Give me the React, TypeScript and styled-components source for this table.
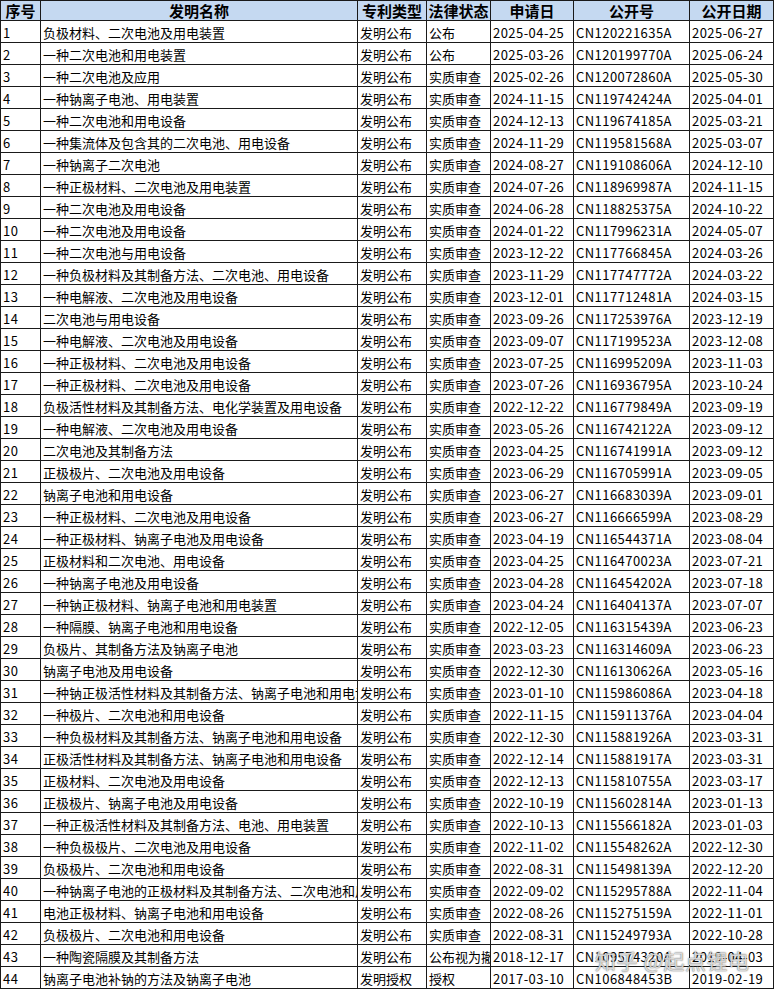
import React from "react";
import styled, { createGlobalStyle } from "styled-components";

const GlobalStyle = createGlobalStyle`
  html, body {
    margin: 0;
    padding: 0;
    background: #ffffff;
  }
  body {
    font-family: "Noto Sans CJK SC", "Noto Sans", sans-serif;
    color: #000000;
  }
`;

const COLS = "40px 317px 69px 64px 83px 116px 84px";

const Sheet = styled.div`
  position: relative;
  width: 774px;
  box-sizing: border-box;
  border-top: 1px solid #1a1a1a;
  border-left: 1px solid #1a1a1a;
`;

const Row = styled.div<{ $header?: boolean }>`
  display: grid;
  grid-template-columns: ${COLS};
  height: ${(p) => (p.$header ? "20px" : "22px")};
  background: ${(p) => (p.$header ? "#c5d9f1" : "#ffffff")};
`;

const Cell = styled.div<{ $header?: boolean; $mono?: boolean }>`
  box-sizing: border-box;
  border-right: 1px solid #1a1a1a;
  border-bottom: 1px solid #1a1a1a;
  overflow: hidden;
  white-space: nowrap;
  display: flex;
  align-items: center;
  justify-content: ${(p) => (p.$header ? "center" : "flex-start")};
  padding: ${(p) => (p.$header ? "0" : "1px 0 0 2px")};
  font-size: ${(p) => (p.$header ? "15px" : "13px")};
  font-weight: ${(p) => (p.$header ? 700 : 400)};
  letter-spacing: ${(p) => (p.$mono ? "0.45px" : "0")};
  line-height: 1;
`;

const Watermark = styled.div`
  position: absolute;
  left: 594px;
  top: 944px;
  font-size: 21px;
  font-family: "Noto Sans CJK SC", sans-serif;
  color: rgba(255, 255, 255, 0.75);
  text-shadow: 0 0 1px rgba(60, 60, 60, 0.8), 0 0 2px rgba(60, 60, 60, 0.4);
  white-space: nowrap;
  pointer-events: none;
  letter-spacing: 0.5px;
`;

type Rec = [string, string, string, string, string, string];

const data: Rec[] = [
  ["负极材料、二次电池及用电装置", "发明公布", "公布", "2025-04-25", "CN120221635A", "2025-06-27"],
  ["一种二次电池和用电装置", "发明公布", "公布", "2025-03-26", "CN120199770A", "2025-06-24"],
  ["一种二次电池及应用", "发明公布", "实质审查", "2025-02-26", "CN120072860A", "2025-05-30"],
  ["一种钠离子电池、用电装置", "发明公布", "实质审查", "2024-11-15", "CN119742424A", "2025-04-01"],
  ["一种二次电池和用电设备", "发明公布", "实质审查", "2024-12-13", "CN119674185A", "2025-03-21"],
  ["一种集流体及包含其的二次电池、用电设备", "发明公布", "实质审查", "2024-11-29", "CN119581568A", "2025-03-07"],
  ["一种钠离子二次电池", "发明公布", "实质审查", "2024-08-27", "CN119108606A", "2024-12-10"],
  ["一种正极材料、二次电池及用电装置", "发明公布", "实质审查", "2024-07-26", "CN118969987A", "2024-11-15"],
  ["一种二次电池及用电设备", "发明公布", "实质审查", "2024-06-28", "CN118825375A", "2024-10-22"],
  ["一种二次电池及用电设备", "发明公布", "实质审查", "2024-01-22", "CN117996231A", "2024-05-07"],
  ["一种二次电池与用电设备", "发明公布", "实质审查", "2023-12-22", "CN117766845A", "2024-03-26"],
  ["一种负极材料及其制备方法、二次电池、用电设备", "发明公布", "实质审查", "2023-11-29", "CN117747772A", "2024-03-22"],
  ["一种电解液、二次电池及用电设备", "发明公布", "实质审查", "2023-12-01", "CN117712481A", "2024-03-15"],
  ["二次电池与用电设备", "发明公布", "实质审查", "2023-09-26", "CN117253976A", "2023-12-19"],
  ["一种电解液、二次电池及用电设备", "发明公布", "实质审查", "2023-09-07", "CN117199523A", "2023-12-08"],
  ["一种正极材料、二次电池及用电设备", "发明公布", "实质审查", "2023-07-25", "CN116995209A", "2023-11-03"],
  ["一种正极材料、二次电池及用电设备", "发明公布", "实质审查", "2023-07-26", "CN116936795A", "2023-10-24"],
  ["负极活性材料及其制备方法、电化学装置及用电设备", "发明公布", "实质审查", "2022-12-22", "CN116779849A", "2023-09-19"],
  ["一种电解液、二次电池及用电设备", "发明公布", "实质审查", "2023-05-26", "CN116742122A", "2023-09-12"],
  ["二次电池及其制备方法", "发明公布", "实质审查", "2023-04-25", "CN116741991A", "2023-09-12"],
  ["正极极片、二次电池及用电设备", "发明公布", "实质审查", "2023-06-29", "CN116705991A", "2023-09-05"],
  ["钠离子电池和用电设备", "发明公布", "实质审查", "2023-06-27", "CN116683039A", "2023-09-01"],
  ["一种正极材料、二次电池及用电设备", "发明公布", "实质审查", "2023-06-27", "CN116666599A", "2023-08-29"],
  ["一种正极材料、钠离子电池及用电设备", "发明公布", "实质审查", "2023-04-19", "CN116544371A", "2023-08-04"],
  ["正极材料和二次电池、用电设备", "发明公布", "实质审查", "2023-04-25", "CN116470023A", "2023-07-21"],
  ["一种钠离子电池及用电设备", "发明公布", "实质审查", "2023-04-28", "CN116454202A", "2023-07-18"],
  ["一种钠正极材料、钠离子电池和用电装置", "发明公布", "实质审查", "2023-04-24", "CN116404137A", "2023-07-07"],
  ["一种隔膜、钠离子电池和用电设备", "发明公布", "实质审查", "2022-12-05", "CN116315439A", "2023-06-23"],
  ["负极片、其制备方法及钠离子电池", "发明公布", "实质审查", "2023-03-23", "CN116314609A", "2023-06-23"],
  ["钠离子电池及用电设备", "发明公布", "实质审查", "2022-12-30", "CN116130626A", "2023-05-16"],
  ["一种钠正极活性材料及其制备方法、钠离子电池和用电设备", "发明公布", "实质审查", "2023-01-10", "CN115986086A", "2023-04-18"],
  ["一种极片、二次电池和用电设备", "发明公布", "实质审查", "2022-11-15", "CN115911376A", "2023-04-04"],
  ["一种负极材料及其制备方法、钠离子电池和用电设备", "发明公布", "实质审查", "2022-12-30", "CN115881926A", "2023-03-31"],
  ["正极活性材料及其制备方法、钠离子电池和用电设备", "发明公布", "实质审查", "2022-12-14", "CN115881917A", "2023-03-31"],
  ["正极材料、二次电池及用电设备", "发明公布", "实质审查", "2022-12-13", "CN115810755A", "2023-03-17"],
  ["正极极片、钠离子电池及用电设备", "发明公布", "实质审查", "2022-10-19", "CN115602814A", "2023-01-13"],
  ["一种正极活性材料及其制备方法、电池、用电装置", "发明公布", "实质审查", "2022-10-13", "CN115566182A", "2023-01-03"],
  ["一种负极极片、二次电池及用电设备", "发明公布", "实质审查", "2022-11-02", "CN115548262A", "2022-12-30"],
  ["负极极片、二次电池和用电设备", "发明公布", "实质审查", "2022-08-31", "CN115498139A", "2022-12-20"],
  ["一种钠离子电池的正极材料及其制备方法、二次电池和用电设备", "发明公布", "实质审查", "2022-09-02", "CN115295788A", "2022-11-04"],
  ["电池正极材料、钠离子电池和用电设备", "发明公布", "实质审查", "2022-08-26", "CN115275159A", "2022-11-01"],
  ["负极极片、二次电池和用电设备", "发明公布", "实质审查", "2022-08-31", "CN115249793A", "2022-10-28"],
  ["一种陶瓷隔膜及其制备方法", "发明公布", "公布视为撤回", "2018-12-17", "CN109574320A", "2019-04-03"],
  ["钠离子电池补钠的方法及钠离子电池", "发明授权", "授权", "2017-03-10", "CN106848453B", "2019-02-19"],
];

const headers = ["序号", "发明名称", "专利类型", "法律状态", "申请日", "公开号", "公开日期"];

export default function App() {
  return (
    <>
      <GlobalStyle />
      <Sheet>
        <Row $header>
          {headers.map((h) => (
            <Cell key={h} $header>
              {h}
            </Cell>
          ))}
        </Row>
        {data.map((r, i) => (
          <Row key={i}>
            <Cell $mono>{i + 1}</Cell>
            <Cell>{r[0]}</Cell>
            <Cell>{r[1]}</Cell>
            <Cell>{r[2]}</Cell>
            <Cell $mono>{r[3]}</Cell>
            <Cell $mono>{r[4]}</Cell>
            <Cell $mono>{r[5]}</Cell>
          </Row>
        ))}
        <Watermark>知乎 @起点锂电</Watermark>
      </Sheet>
    </>
  );
}
